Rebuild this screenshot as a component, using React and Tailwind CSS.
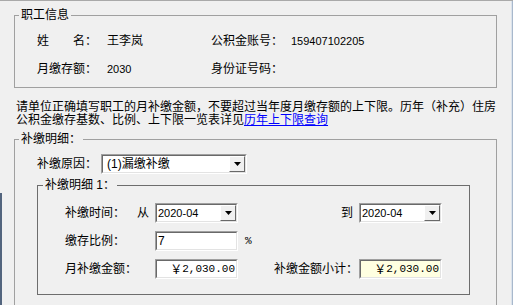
import React from 'react';

const DropArrow = () => (
  <div className="flex h-full w-[16px] items-center justify-center border border-t-white border-l-white border-r-[#696969] border-b-[#696969] bg-[#f0f0f0]">
    <svg width="7" height="4" viewBox="0 0 7 4">
      <path d="M0 0h7L3.5 4z" fill="#000" />
    </svg>
  </div>
);

// sunken win32-style edit / combo box
const Field = ({ width, bg = 'bg-white', children, combo }) => (
  <div className={`h-[20px] border border-t-[#a0a0a0] border-l-[#a0a0a0] border-r-white border-b-white ${width}`}>
    <div className={`flex h-full items-center border border-t-[#696969] border-l-[#696969] border-r-[#e3e3e3] border-b-[#e3e3e3] ${bg}`}>
      <div className="flex-1 overflow-hidden whitespace-nowrap leading-[16px]">{children}</div>
      {combo && <DropArrow />}
    </div>
  </div>
);

const Money = ({ value }) => (
  <div className="flex items-center justify-end pr-[1px] font-['Liberation_Mono',monospace] text-[11px] leading-[16px]">
    <span className="font-['Noto_Sans_CJK_SC',sans-serif] text-[12px] leading-[16px]">￥</span>
    <span>{value}</span>
  </div>
);

export default function App() {
  return (
    <div className="relative h-[305px] w-[513px] overflow-hidden border-t border-[#a9a9a9] bg-[#f0f0f0] font-['Liberation_Sans','Noto_Sans_CJK_SC',sans-serif] text-[12px] leading-[14px] text-black">
      {/* 职工信息 */}
      <fieldset className="ml-[14px] mt-[7px] w-[483px] border border-[#a0a0a0] pb-[8px]">
        <legend className="ml-[4px] px-[2px]">职工信息</legend>
        <div className="grid grid-cols-[70px_104px_80px_1fr] gap-y-[8px] pl-[22px] pt-[9px]">
          <div className="flex h-[20px] items-center">
            <span className="w-[36px]">姓</span>
            <span>名：</span>
          </div>
          <div className="flex h-[20px] items-center">王李岚</div>
          <div className="flex h-[20px] items-center">公积金账号：</div>
          <div className="flex h-[20px] items-center text-[11px]">159407102205</div>

          <div className="flex h-[20px] items-center">月缴存额：</div>
          <div className="flex h-[20px] items-center text-[11px]">2030</div>
          <div className="flex h-[20px] items-center">身份证号码：</div>
          <div className="flex h-[20px] items-center"></div>
        </div>
      </fieldset>

      {/* 提示 */}
      <p className="mt-[13px] whitespace-nowrap pl-[16px] leading-[13px]">
        请单位正确填写职工的月补缴金额，不要超过当年度月缴存额的上下限。历年（补充）住房
        <br />
        公积金缴存基数、比例、上下限一览表详见
        <span className="text-[#0000ff] underline">历年上下限查询</span>
      </p>

      {/* 补缴明细 */}
      <fieldset className="ml-[14px] mt-[5px] h-[300px] w-[483px] border border-[#a0a0a0]">
        <legend className="ml-[4px] px-[2px]">补缴明细：</legend>
        <div className="flex items-center pl-[22px] pt-[8px]">
          <span className="w-[64px]">补缴原因：</span>
          <Field width="w-[146px]" combo>
            <span className="pl-[4px]">(1)漏缴补缴</span>
          </Field>
        </div>

        <fieldset className="ml-[22px] mt-[4px] w-[433px] border border-[#6d6d6d] pb-[15px]">
          <legend className="ml-[5px] px-[2px]">补缴明细 1：</legend>
          <div className="flex flex-col gap-[8px] pl-[27px] pt-[11px]">
            <div className="flex items-center">
              <span className="w-[72px]">补缴时间：</span>
              <span className="w-[18px]">从</span>
              <Field width="w-[83px]" combo>
                <span className="pl-[1px] text-[11px]">2020-04</span>
              </Field>
              <span className="w-[121px] pr-[6px] text-right">到</span>
              <Field width="w-[83px]" combo>
                <span className="pl-[1px] text-[11px]">2020-04</span>
              </Field>
            </div>

            <div className="flex items-center">
              <span className="w-[90px]">缴存比例：</span>
              <Field width="w-[83px]">
                <span className="pl-[1px]">7</span>
              </Field>
              <span className="ml-[7px] font-['Liberation_Mono',monospace] text-[11px]">%</span>
            </div>

            <div className="flex items-center">
              <span className="w-[90px]">月补缴金额：</span>
              <Field width="w-[83px]">
                <Money value="2,030.00" />
              </Field>
              <span className="w-[121px] pr-[1px] text-right">补缴金额小计：</span>
              <Field width="w-[83px]" bg="bg-[#ffffe1]">
                <Money value="2,030.00" />
              </Field>
            </div>
          </div>
        </fieldset>
      </fieldset>

      {/* window edges */}
      <div className="absolute bottom-0 left-0 top-[192px] w-[2px] bg-[#53657e]" />
      <div className="absolute bottom-0 right-0 top-0 w-[2px] border-l border-[#dbe3ec] bg-[#a8b8cc]" />
    </div>
  );
}
